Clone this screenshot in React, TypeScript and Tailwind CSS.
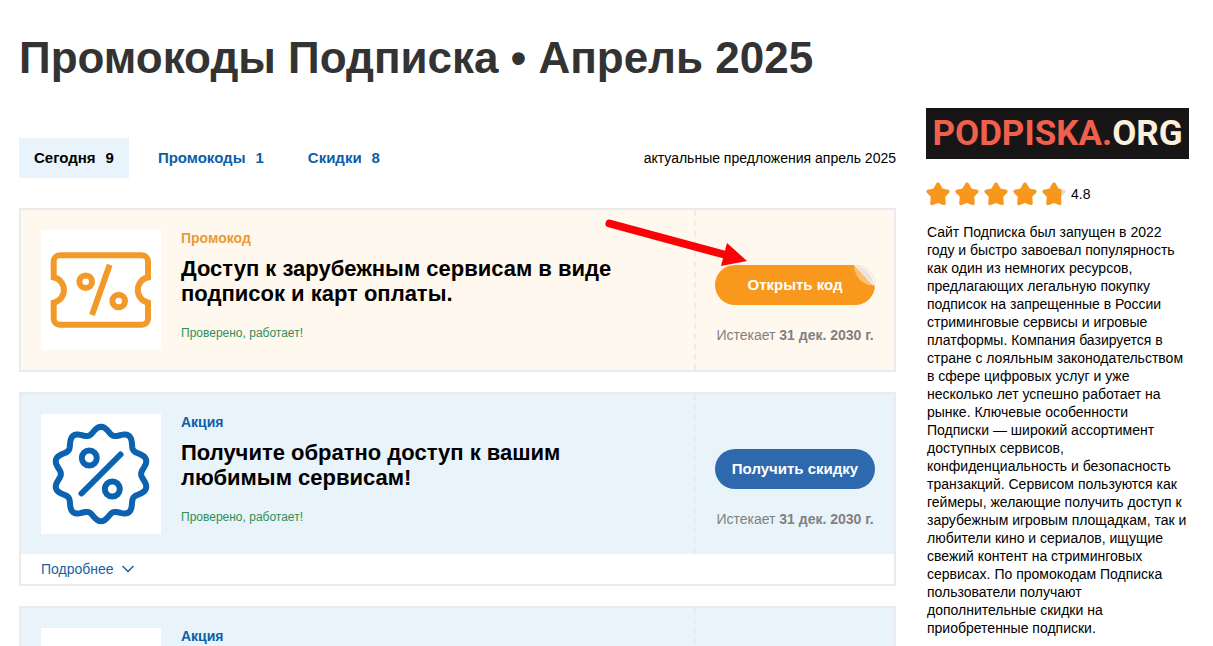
import { useState } from "react";
import { ChevronDown } from "lucide-react";
import clsx from "clsx";

type OfferKind = "code" | "sale";

interface Offer {
  id: number;
  kind: OfferKind;
  label: string;
  title?: string;
  button?: string;
  expires?: string;
  details?: boolean;
  pointer?: boolean;
}

const offers: Offer[] = [
  { id: 1, kind: "code", label: "Промокод", title: "Доступ к зарубежным сервисам в виде подписок и карт оплаты.", button: "Открыть код", expires: "31 дек. 2030 г.", pointer: true },
  { id: 2, kind: "sale", label: "Акция", title: "Получите обратно доступ к вашим любимым сервисам!", button: "Получить скидку", expires: "31 дек. 2030 г.", details: true },
  { id: 3, kind: "sale", label: "Акция" },
];

const tabs = [
  { name: "Сегодня", count: 9 },
  { name: "Промокоды", count: 1 },
  { name: "Скидки", count: 8 },
];

const about =
  "Сайт Подписка был запущен в 2022 году и быстро завоевал популярность как один из немногих ресурсов, предлагающих легальную покупку подписок на запрещенные в России стриминговые сервисы и игровые платформы. Компания базируется в стране с лояльным законодательством в сфере цифровых услуг и уже несколько лет успешно работает на рынке. Ключевые особенности Подписки — широкий ассортимент доступных сервисов, конфиденциальность и безопасность транзакций. Сервисом пользуются как геймеры, желающие получить доступ к зарубежным игровым площадкам, так и любители кино и сериалов, ищущие свежий контент на стриминговых сервисах. По промокодам Подписка пользователи получают дополнительные скидки на приобретенные подписки.";

// wavy badge outline with ten bumps
const badgePoints = Array.from({ length: 180 }, (_, i) => {
  const a = (i * Math.PI) / 90;
  const r = 43.7 + 3.6 * Math.cos(10 * a);
  return `${(60 + r * Math.sin(a)).toFixed(2)},${(60 - r * Math.cos(a)).toFixed(2)}`;
}).join(" ");

function TicketIcon() {
  return (
    <svg viewBox="0 0 120 120" className="size-full" fill="none" stroke="#f29a27" strokeWidth="6">
      <path d="M18.7 25.3H101a6 6 0 0 1 6 6V47.3a13 13 0 0 0 0 25.4V88.7a6 6 0 0 1-6 6H18.7a6 6 0 0 1-6-6V72.7a13 13 0 0 0 0-25.4V31.3a6 6 0 0 1 6-6Z" />
      <circle cx="44.7" cy="51.7" r="6.3" />
      <circle cx="77.7" cy="71" r="6.3" />
      <path d="M68.7 34.7 51 85" />
    </svg>
  );
}

function BadgeIcon() {
  return (
    <svg viewBox="0 0 120 120" className="size-full" fill="none" stroke="#0b62b0" strokeWidth="6" strokeLinecap="round">
      <polygon points={badgePoints} />
      <circle cx="48.3" cy="44" r="7.5" />
      <circle cx="71.3" cy="75" r="7.5" />
      <path d="M79.5 40.5 40.5 79.5" />
    </svg>
  );
}

function Star({ fill }: { fill: number }) {
  const d = "M12 2.2 15.4 8.2 21.8 9.5 17.4 14.2 18 21.4 12 19.2 6 21.4 6.6 14.2 2.2 9.5 8.6 8.2Z";
  return (
    <svg viewBox="0 0 24 24" className="size-6" strokeWidth="3.4" strokeLinejoin="round">
      <path d={d} fill="#ead9c4" stroke="#ead9c4" />
      <svg width={24 * fill} height="24">
        <path d={d} fill="#f7981d" stroke="#f7981d" />
      </svg>
    </svg>
  );
}

function Pointer() {
  return (
    <svg viewBox="0 0 150 52" className="pointer-events-none absolute top-1 -left-24 h-[52px] w-[150px]">
      <path d="M9.5 9.5 126 41" stroke="#fb0207" strokeWidth="8" strokeLinecap="round" />
      <path d="M127 29 147 47 121 52Z" fill="#fb0207" />
    </svg>
  );
}

function PeelCorner() {
  return (
    <svg viewBox="0 0 22 22" className="absolute top-0 right-0 size-[22px]">
      <path d="M1 0H22V22L21 20Z" fill="#fef7ee" />
      <path d="M1 0C1 10 8 20 20 20.5Z" fill="#fbc070" />
      <path d="M1 0 20 20.5C21 12 12 1 1 0Z" fill="#e6e4e8" />
      <path d="M2 0.5 20 20" stroke="#f6eee6" />
    </svg>
  );
}

function OfferCard({ offer }: { offer: Offer }) {
  const code = offer.kind === "code";

  return (
    <article className="border-2 border-[#ebebee]">
      <div className={clsx("flex min-h-40", code ? "bg-[#fff8ee]" : "bg-[#e8f3fa]")}>
        <div className="flex flex-1 gap-5 p-5">
          <div className="size-[120px] shrink-0 bg-white">
            {offer.title && (code ? <TicketIcon /> : <BadgeIcon />)}
          </div>
          <div>
            <p className={clsx("text-sm leading-4 font-bold", code ? "text-[#eb9a36]" : "text-[#0b5ea8]")}>{offer.label}</p>
            {offer.title && (
              <>
                <h2 className="mt-2.5 max-w-[460px] text-[22px] leading-[25px] font-bold">{offer.title}</h2>
                <p className="mt-[19px] text-xs text-[#2f8f57]">Проверено, работает!</p>
              </>
            )}
          </div>
        </div>
        <div className={clsx("relative w-[200px] shrink-0 border-l-2 border-dashed pt-[55px] text-center", code ? "border-[#f1e9ee]" : "border-[#e7eaf4]")}>
          {offer.pointer && <Pointer />}
          {offer.button && (
            <>
              <button className={clsx("relative h-10 w-40 overflow-hidden rounded-full text-[15px] font-bold text-white", code ? "bg-[#f8991d]" : "bg-[#2f69ad]")}>
                {offer.button}
                {code && <PeelCorner />}
              </button>
              <p className="mt-5 text-sm text-[#808080]">
                Истекает <b>{offer.expires}</b>
              </p>
            </>
          )}
        </div>
      </div>
      {offer.details && (
        <button className="flex h-[30px] items-center gap-1 px-5 text-sm text-[#1a60a5]">
          Подробнее <ChevronDown size={20} strokeWidth={1.8} />
        </button>
      )}
    </article>
  );
}

export default function App() {
  const [active, setActive] = useState("Сегодня");

  return (
    <div className="flex min-h-screen gap-[30px] bg-white pr-6 pl-[19px] font-['Liberation_Sans',Arial,sans-serif] text-black">
      <main className="min-w-0 flex-1">
        <h1 className="pt-8 text-[44px] leading-[52px] font-bold text-[#333]">Промокоды Подписка • Апрель 2025</h1>

        <div className="mt-[54px] flex items-center justify-between">
          <nav className="flex gap-3.5">
            {tabs.map((t) => (
              <button
                key={t.name}
                onClick={() => setActive(t.name)}
                className={clsx("flex h-10 items-center gap-2.5 px-[15px] text-[15px] font-bold", active === t.name ? "bg-[#e8f3fb]" : "text-[#0b5ea8]")}
              >
                <span>{t.name}</span>
                <span>{t.count}</span>
              </button>
            ))}
          </nav>
          <p className="text-sm">актуальные предложения апрель 2025</p>
        </div>

        <div className="mt-[30px] flex flex-col gap-5">
          {offers.map((o) => <OfferCard key={o.id} offer={o} />)}
        </div>
      </main>

      <aside className="w-[263px] shrink-0 pt-[108px]">
        <a href="#" className="flex h-[51px] items-center justify-center bg-[#171516] font-[Roboto,sans-serif] text-[35px] leading-none font-bold text-[#f0604d]">
          PODPISKA.<span className="text-[#fdf0dc]">ORG</span>
        </a>
        <div className="mt-[23px] flex items-center gap-[5px]">
          {[1, 1, 1, 1, 0.8].map((f, i) => <Star key={i} fill={f} />)}
          <span className="text-sm">4.8</span>
        </div>
        <p className="mt-[17px] pl-px text-sm leading-[18px]">{about}</p>
      </aside>
    </div>
  );
}
